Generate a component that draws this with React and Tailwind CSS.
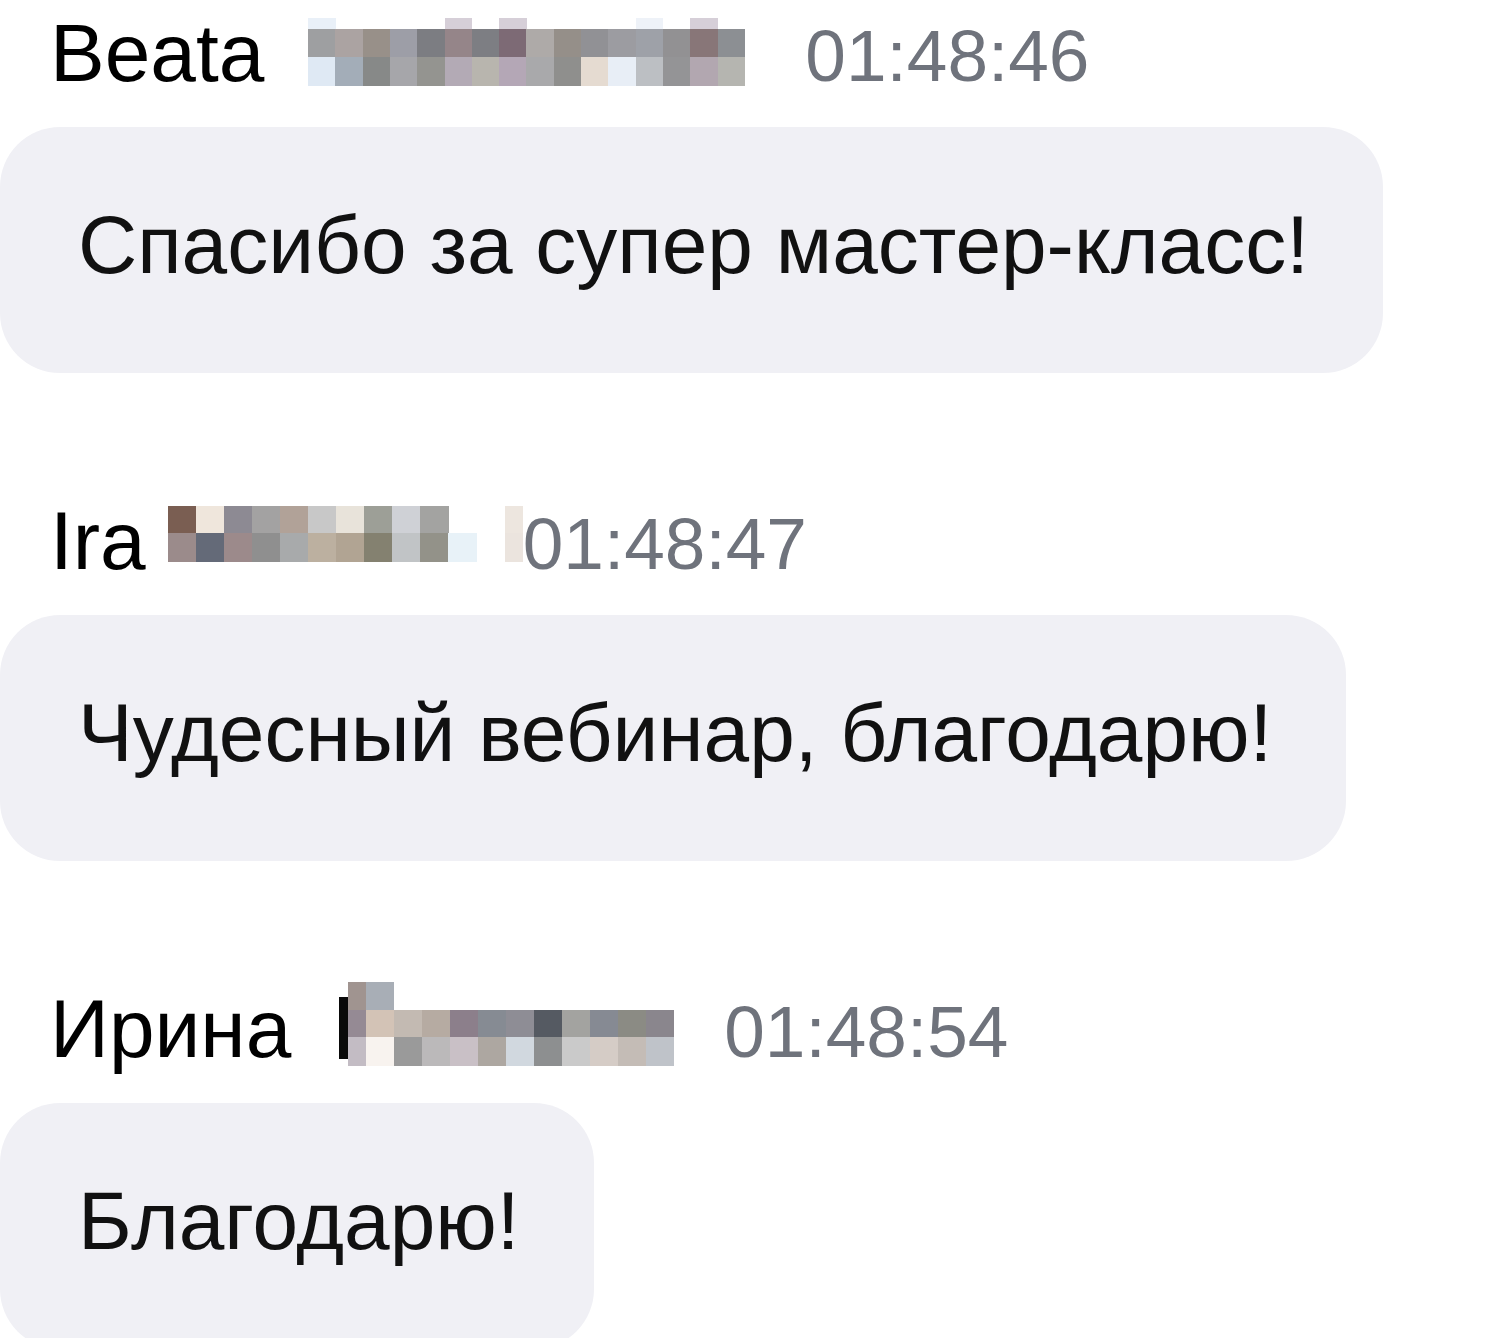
import React from 'react';

// pixelated surname blocks, one array of colours per row (null = empty cell)
const mosaics = {
  beata: {
    width: 437,
    height: 68,
    cell: 27.3,
    rows: [
      { y: 0, h: 11, colors: ['#e9f0f8', null, null, null, null, '#d6cfd8', null, '#d6cfd8', null, null, null, null, '#eef2f8', null, '#d6cfd8', null] },
      { y: 11, h: 28, colors: ['#9e9fa1', '#aba3a2', '#989089', '#9d9ea7', '#7c7d82', '#958589', '#7d7e83', '#7d6a75', '#aeaaa8', '#958f89', '#919195', '#9c9ca1', '#9ea1a8', '#929193', '#887678', '#8c8f93'] },
      { y: 39, h: 29, colors: ['#dfe9f4', '#a3adb8', '#878988', '#a6a6aa', '#949490', '#b3aab5', '#b8b5ae', '#b4a7b6', '#a9a9ab', '#8f8f8d', '#e5dbd1', '#e8eef6', '#bcbfc3', '#949496', '#b2a7b0', '#b5b5b0'] },
    ],
    extra: [],
  },
  ira: {
    width: 355,
    height: 56,
    cell: 28,
    rows: [
      { y: 0, h: 27, colors: ['#7a5e52', '#efe6dc', '#8d8a93', '#a3a2a2', '#b1a298', '#c8c8c8', '#e8e3da', '#9d9f97', '#cfd1d6', '#a3a3a1'] },
      { y: 27, h: 29, colors: ['#9b8b8b', '#646a78', '#9c8a8b', '#8f8f8f', '#a8aaab', '#bcb0a0', '#b1a493', '#848170', '#c1c4c6', '#939289', '#e8f2f8'] },
    ],
    extra: [
      { x: 337, y: 0, w: 18, h: 27, fill: '#ede6df' },
      { x: 337, y: 27, w: 18, h: 29, fill: '#ebe4de' },
    ],
  },
  irina: {
    width: 335,
    height: 84,
    cell: 28,
    offset: 27,
    rows: [
      { y: 28, h: 27, colors: ['#d3c3b6', '#c3bab2', '#b6aba2', '#8c7f8b', '#868b93', '#8e8d95', '#555a62', '#a3a3a0', '#868a93', '#8b8b84', '#8a868d'] },
      { y: 55, h: 29, colors: ['#f8f3ef', '#9a9a9a', '#bbb9ba', '#c9c0c6', '#ada7a1', '#d1d8df', '#8d8f90', '#cacaca', '#d5ccc6', '#c4bcb6', '#bfc3c9'] },
    ],
    extra: [
      { x: 0, y: 15, w: 9, h: 62, fill: '#0a0a0a' },
      { x: 9, y: 0, w: 18, h: 28, fill: '#a09490' },
      { x: 27, y: 0, w: 28, h: 28, fill: '#a8aeb6' },
      { x: 9, y: 28, w: 18, h: 27, fill: '#958a94' },
      { x: 9, y: 55, w: 18, h: 29, fill: '#c3bcc4' },
    ],
  },
};

const Mosaic = ({ data, className }) => (
  <svg
    className={className}
    width={data.width}
    height={data.height}
    viewBox={`0 0 ${data.width} ${data.height}`}
    shapeRendering="crispEdges"
  >
    {data.rows.map((row, r) =>
      row.colors.map((c, i) =>
        c ? (
          <rect
            key={`${r}-${i}`}
            x={(data.offset || 0) + i * data.cell}
            y={row.y}
            width={data.cell + 0.5}
            height={row.h}
            fill={c}
          />
        ) : null
      )
    )}
    {data.extra.map((b, i) => (
      <rect key={`e${i}`} x={b.x} y={b.y} width={b.w} height={b.h} fill={b.fill} />
    ))}
  </svg>
);

const messages = [
  {
    name: 'Beata',
    mosaic: mosaics.beata,
    mosaicClass: 'ml-[44px] mt-[18px] shrink-0',
    timeClass: 'ml-[60px]',
    time: '01:48:46',
    text: 'Спасибо за супер мастер-класс!',
  },
  {
    name: 'Ira',
    mosaic: mosaics.ira,
    mosaicClass: 'ml-[22px] mt-[18px] shrink-0',
    timeClass: 'ml-[0px]',
    time: '01:48:47',
    text: 'Чудесный вебинар, благодарю!',
  },
  {
    name: 'Ирина',
    mosaic: mosaics.irina,
    mosaicClass: 'ml-[48px] mt-[6px] shrink-0',
    timeClass: 'ml-[50px]',
    time: '01:48:54',
    text: 'Благодарю!',
  },
];

const App = () => {
  return (
    <div className="min-h-screen bg-white font-['Liberation_Sans',Arial,sans-serif] overflow-hidden">
      {messages.map((m, idx) => (
        <div key={m.time} className={idx === 0 ? '' : 'mt-[115px]'}>
          {/* name row */}
          <div className="flex items-start h-[127px] pl-[50px]">
            <span className="mt-[12px] text-[82px] leading-none text-black whitespace-nowrap">{m.name}</span>
            <Mosaic data={m.mosaic} className={m.mosaicClass} />
            <span className={`mt-[19px] text-[73px] leading-none text-[#6f737c] whitespace-nowrap ${m.timeClass}`}>
              {m.time}
            </span>
          </div>
          {/* bubble */}
          <div className="w-fit rounded-[60px] bg-[#f0f0f5] pl-[78px] pr-[74px] pt-[72px] pb-[82px] text-[82px] leading-[92px] text-[#111] whitespace-nowrap">
            {m.text}
          </div>
        </div>
      ))}
    </div>
  );
};

export default App;
